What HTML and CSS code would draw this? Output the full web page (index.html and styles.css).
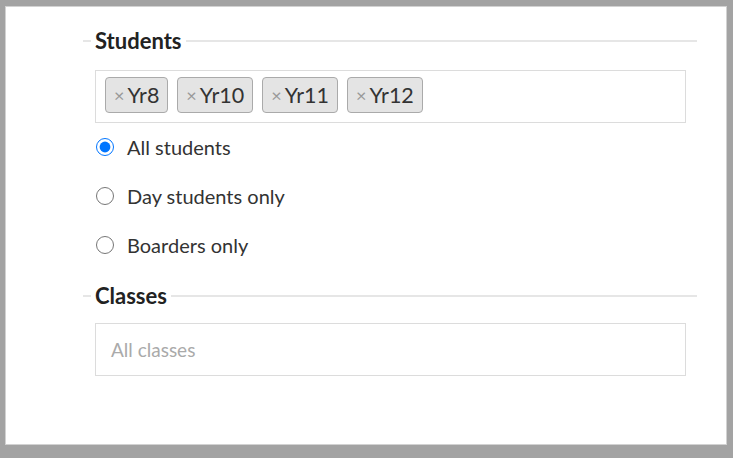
FILE: index.html
```html
<!DOCTYPE html>
<html>
<head>
<meta charset="utf-8">
<link rel="stylesheet" href="styles.css">
</head>
<body>
<div class="panel">
  <fieldset class="group">
    <legend class="group-title">Students</legend>
    <div class="group-body group-body-students">
      <div class="tag-box">
        <span class="tag"><span class="tag-x">×</span>Yr8</span>
        <span class="tag"><span class="tag-x">×</span>Yr10</span>
        <span class="tag"><span class="tag-x">×</span>Yr11</span>
        <span class="tag"><span class="tag-x">×</span>Yr12</span>
      </div>
      <div class="radios">
        <label class="radio-row"><input type="radio" name="s" checked><span>All students</span></label>
        <label class="radio-row"><input type="radio" name="s"><span>Day students only</span></label>
        <label class="radio-row"><input type="radio" name="s"><span>Boarders only</span></label>
      </div>
    </div>
  </fieldset>
  <fieldset class="group group-classes">
    <legend class="group-title">Classes</legend>
    <div class="group-body">
      <div class="text-box"><span class="placeholder">All classes</span></div>
    </div>
  </fieldset>
</div>
</body>
</html>
```
FILE: styles.css
```css
html, body {
  margin: 0;
  padding: 0;
}
body {
  background: #a3a3a3;
  padding: 6px 6px 0 5px;
  font-family: Lato, "Liberation Sans", sans-serif;
  color: #333;
}
.panel {
  background: #fff;
  border: 1px solid #d2d2d2;
  box-sizing: border-box;
  height: 439px;
  padding-top: 22px;
}
.group {
  margin: 0 29px 0 77px;
  padding: 0 0 0 8px;
  border: none;
  border-top: 2px solid #e6e6e6;
  min-width: 0;
}
.group-title {
  padding: 0 4px;
  font-weight: 700;
  font-size: 22px;
  line-height: 24px;
  color: #222;
}
.group-body {
  padding: 15px 11px 0 4px;
}
.group-body-students {
  padding-top: 17px;
}
.tag-box {
  border: 1px solid #dcdcdc;
  height: 53px;
  box-sizing: border-box;
  padding: 6px 8px 0 9px;
  display: flex;
  gap: 9px;
}
.tag {
  display: flex;
  align-items: center;
  height: 36px;
  box-sizing: border-box;
  padding: 0 8px 0 8px;
  background: #e4e4e4;
  border: 1px solid #aaa;
  border-radius: 4px;
  font-size: 21.5px;
  color: #333;
}
.tag-x {
  color: #999;
  font-size: 18px;
  margin-right: 3px;
}
.radios {
  display: flex;
  flex-direction: column;
}
.radio-row {
  display: flex;
  align-items: center;
  height: 49px;
  font-size: 20px;
  color: #333;
}
.radio-row input {
  width: 18px;
  height: 18px;
  margin: 0 13px 0 1px;
  accent-color: #0075ff;
}
.radios .radio-row:first-child {
  height: 48px;
}
.group-classes {
  margin-top: 15px;
}
.text-box {
  border: 1px solid #dcdcdc;
  height: 53px;
  box-sizing: border-box;
  display: flex;
  align-items: center;
  padding-left: 15px;
}
.placeholder {
  color: #aaa;
  font-size: 19px;
}
```
